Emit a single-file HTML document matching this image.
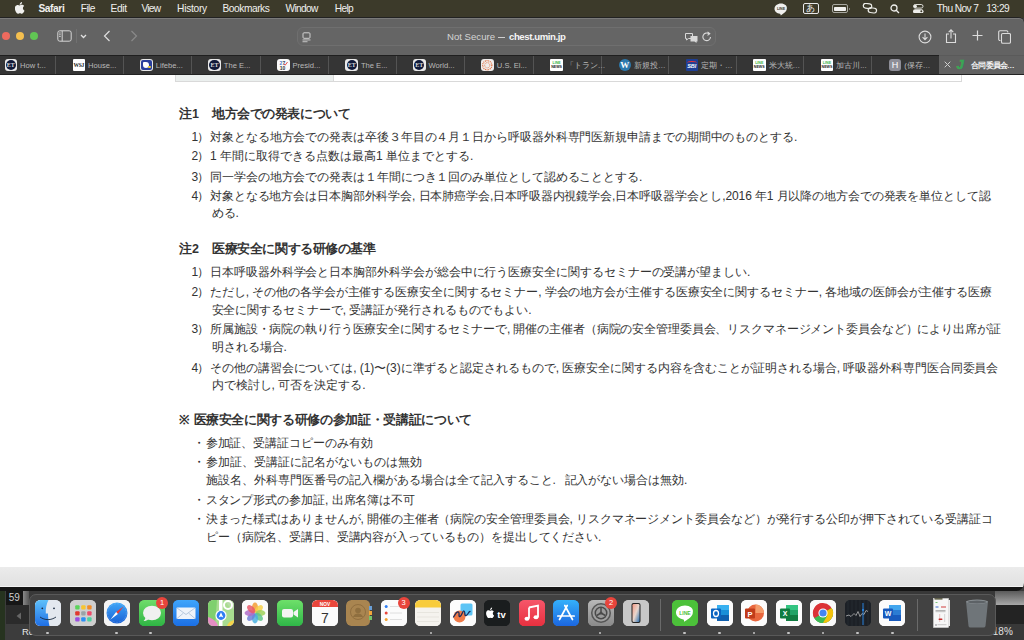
<!DOCTYPE html>
<html><head><meta charset="utf-8">
<style>
*{box-sizing:border-box}
html,body{margin:0;padding:0;width:1024px;height:640px;overflow:hidden;background:#3a3a3a;font-family:"Liberation Sans",sans-serif;position:relative}
.a{position:absolute;white-space:nowrap}
#menubar{position:absolute;left:0;top:0;width:1024px;height:18px;background:#3c3a2a;color:#f0f0ee;font-size:10.2px}
#menubar .m{position:absolute;top:2.5px;white-space:nowrap;line-height:12px}
#win{position:absolute;left:0;top:17px;width:1024px;height:574px;background:#151515;border-radius:0 6px 8px 0;overflow:hidden}
#win::before{content:'';position:absolute;right:0;top:0;width:8px;height:8px;background:#222}
#toolbar{position:absolute;left:0;top:0;width:1024px;height:37.5px;background:#636363;border-top:1px solid #222;box-shadow:inset 0 1px 0 #7a7a7a;border-top-right-radius:5px}
#tabbar{position:absolute;left:0;top:37.5px;width:1024px;height:20.5px;background:#353535}
.sep{position:absolute;top:1px;width:1px;height:18px;background:#545454}
.tt{position:absolute;top:6.2px;color:#b9b9b9;font-size:7.6px;line-height:10px;white-space:nowrap}
.ti{position:absolute;top:4px;width:12.5px;height:12.5px;border-radius:3px;overflow:hidden}
#content{position:absolute;left:0;top:58px;width:1024px;height:492px;background:#fff}
.l{position:absolute;white-space:nowrap;line-height:14px;color:#333;font-size:12px}
.h{font-weight:bold;font-size:12.5px}
#wbot{position:absolute;left:0;top:550px;width:1024px;height:20px;background:linear-gradient(#ebebeb,#e1e1e1);border-bottom:1px solid #f2f2f2}
.di{position:absolute;top:600px;width:26px;height:26px;overflow:hidden}
</style></head><body>
<div id="menubar">
<svg class="a" style="left:15px;top:2.4px" width="10.6" height="11.8" viewBox="0 0 21.5 24"><path fill="#f0f0ee" d="M12.152 6.896c-.948 0-2.415-1.078-3.96-1.04-2.04.027-3.91 1.183-4.961 3.014-2.117 3.675-.546 9.103 1.519 12.09 1.013 1.454 2.208 3.09 3.792 3.039 1.52-.065 2.09-.987 3.935-.987 1.831 0 2.35.987 3.96.948 1.637-.026 2.676-1.48 3.676-2.948 1.156-1.688 1.636-3.325 1.662-3.415-.039-.013-3.182-1.221-3.22-4.857-.026-3.04 2.48-4.494 2.597-4.559-1.429-2.09-3.623-2.324-4.39-2.376-2-.156-3.675 1.090-4.610 1.090zM15.53 3.830c.843-1.012 1.4-2.427 1.245-3.830-1.207.052-2.662.805-3.532 1.818-.780.896-1.454 2.338-1.273 3.714 1.338.104 2.715-.688 3.559-1.701" transform="translate(-2.5 0)"/></svg>
<div class="m" style="left:38.5px;font-weight:bold;letter-spacing:-0.42px">Safari</div>
<div class="m" style="left:80.7px;letter-spacing:-0.53px">File</div>
<div class="m" style="left:110.4px;letter-spacing:-0.27px">Edit</div>
<div class="m" style="left:141.6px;letter-spacing:-0.83px">View</div>
<div class="m" style="left:177.1px;letter-spacing:-0.27px">History</div>
<div class="m" style="left:222.5px;letter-spacing:-0.45px">Bookmarks</div>
<div class="m" style="left:285.5px;letter-spacing:-0.68px">Window</div>
<div class="m" style="left:334.8px;letter-spacing:-0.7px">Help</div>
<!-- right status -->
<svg class="a" style="left:774px;top:2.5px" width="14" height="13" viewBox="0 0 14 13"><path fill="#f0f0ee" d="M7 0.5C3.4 0.5 0.5 2.8 0.5 5.7c0 2.6 2.3 4.7 5.4 5.1c0.2 0.1 0.5 0.2 0.6 0.4c0.1 0.2 0 0.5 0 0.7c0 0.2-0.1 0.6 0.5 0.3c0.6-0.3 3.3-2 4.5-3.4c0.9-0.9 1.3-1.9 1.3-3C13.5 2.8 10.6 0.5 7 0.5z"/><text x="7" y="7.3" font-size="3.6" font-family="Liberation Sans" font-weight="bold" fill="#3c3a2a" text-anchor="middle">LINE</text></svg>
<div class="a" style="left:802.6px;top:3px;width:16px;height:11px;border:1px solid #e8e8e8;border-radius:2px;color:#f0f0ee;font-size:8.5px;line-height:9px;text-align:center">あ</div>
<div class="a" style="left:832px;top:4.4px;width:16px;height:8.3px;border:1px solid #a8a8a0;border-radius:2px;padding:1.2px"><div style="width:100%;height:100%;background:#f0f0ee;border-radius:0.8px"></div></div>
<div class="a" style="left:848.5px;top:7.5px;width:1.5px;height:2.5px;background:#9a9a9a;border-radius:0 1px 1px 0"></div>
<svg class="a" style="left:861.5px;top:3px" width="16" height="11" viewBox="0 0 16 11"><g fill="none" stroke="#eeeeea" stroke-width="1.2" transform="rotate(8 8 5.5)"><rect x="1" y="1" width="8.4" height="4.8" rx="2.4"/><rect x="6.4" y="4.6" width="8.4" height="4.8" rx="2.4"/></g></svg>
<svg class="a" style="left:889.5px;top:4px" width="10" height="10" viewBox="0 0 10 10"><g fill="none" stroke="#f0f0ee" stroke-width="1.3"><circle cx="4" cy="4" r="3"/><path d="M6.2 6.2L9 9"/></g></svg>
<svg class="a" style="left:913.3px;top:3.8px" width="10.5" height="9.5" viewBox="0 0 10.5 9.5"><rect x="0.5" y="0.5" width="9.5" height="3.6" rx="1.8" fill="none" stroke="#eeeeea" stroke-width="0.9"/><circle cx="2.3" cy="2.3" r="1.6" fill="#eeeeea"/><rect x="0" y="5.2" width="10.5" height="4.3" rx="2.15" fill="#eeeeea"/><circle cx="8.3" cy="7.35" r="1" fill="#3c3a2a"/></svg>
<div class="m" style="left:936.7px;letter-spacing:-0.6px">Thu Nov 7</div><div class="m" style="left:986.2px;letter-spacing:-0.48px">13:29</div>
</div>
<div id="win">
<div id="toolbar">
<div class="a" style="left:1.5px;top:13.9px;width:8.6px;height:8.6px;border-radius:50%;background:#ed6a5e"></div>
<div class="a" style="left:15.5px;top:13.9px;width:8.6px;height:8.6px;border-radius:50%;background:#f4bf4f"></div>
<div class="a" style="left:29.8px;top:13.9px;width:8.6px;height:8.6px;border-radius:50%;background:#61c554"></div>
<svg class="a" style="left:56.5px;top:12px" width="15" height="12" viewBox="0 0 15 12"><g fill="none" stroke="#d6d6d6" stroke-width="1"><rect x="0.8" y="0.8" width="13.4" height="10.4" rx="2"/><path d="M5.2 0.8v10.4"/></g><g fill="#d6d6d6"><rect x="2" y="2.6" width="1.8" height="0.8"/><rect x="2" y="4.4" width="1.8" height="0.8"/><rect x="2" y="6.2" width="1.8" height="0.8"/></g></svg>
<div class="a" style="left:75.5px;top:11px;width:1px;height:14px;background:#707070"></div>
<svg class="a" style="left:80px;top:16px" width="7" height="5" viewBox="0 0 7 5"><path d="M1 1l2.5 2.5L6 1" fill="none" stroke="#e0e0e0" stroke-width="1.3"/></svg>
<svg class="a" style="left:103px;top:12px" width="8" height="12" viewBox="0 0 8 12"><path d="M6.5 1L1.5 6l5 5" fill="none" stroke="#dedede" stroke-width="1.2"/></svg>
<svg class="a" style="left:129.5px;top:12px" width="8" height="12" viewBox="0 0 8 12"><path d="M1.5 1l5 5l-5 5" fill="none" stroke="#8a8a8a" stroke-width="1.2"/></svg>
<div class="a" style="left:296.5px;top:9px;width:419px;height:19px;border:1px solid #6f6f6f;border-radius:6px;background:#656565"></div>
<svg class="a" style="left:301.5px;top:13.5px" width="9" height="11" viewBox="0 0 9 11"><g fill="none" stroke="#d0d0d0" stroke-width="1"><rect x="1" y="0.8" width="7" height="5.5" rx="1"/></g><rect x="0.5" y="7.5" width="8" height="0.9" fill="#d0d0d0"/><rect x="0.5" y="9.3" width="5" height="0.9" fill="#d0d0d0"/></svg>
<div class="a" style="left:447px;top:12.5px;color:#d4d4d4;font-size:9.6px;line-height:12px">Not Secure</div><div class="a" style="left:497.5px;top:19px;width:7px;height:1px;background:#cfcfcf"></div><div class="a" style="left:509px;top:12.5px;color:#f6f6f6;font-size:9.6px;line-height:12px;font-weight:bold;letter-spacing:-0.42px">chest.umin.jp</div>
<svg class="a" style="left:683.5px;top:12.5px" width="15" height="13" viewBox="0 0 15 13"><g fill="none" stroke="#d8d8d8" stroke-width="1"><path d="M1.5 2.5h7v5h-4l-2 1.5v-1.5h-1z"/></g><path d="M6.5 5h7v5.5h-1v1.5l-2-1.5h-4z" fill="#d8d8d8"/></svg>
<svg class="a" style="left:702px;top:13px" width="10" height="11" viewBox="0 0 10 11"><path d="M8.5 6a3.8 3.8 0 1 1-1.5-3.2" fill="none" stroke="#d8d8d8" stroke-width="1.1"/><path d="M5.5 0.8l2.3 2l-2.3 1.6" fill="none" stroke="#d8d8d8" stroke-width="1.1"/></svg>
<svg class="a" style="left:917.5px;top:11.5px" width="14" height="14" viewBox="0 0 14 14"><g fill="none" stroke="#dcdcdc" stroke-width="1.1"><circle cx="7" cy="7" r="5.9"/><path d="M7 3.5v6M4.6 7.2L7 9.6l2.4-2.4"/></g></svg>
<svg class="a" style="left:945px;top:10.5px" width="12" height="15" viewBox="0 0 12 15"><g fill="none" stroke="#dcdcdc" stroke-width="1.1"><path d="M4 5H1.5v8.5h9V5H8"/><path d="M6 9.5V1M3.7 3.2L6 0.9l2.3 2.3"/></g></svg>
<svg class="a" style="left:971.5px;top:12px" width="11" height="11" viewBox="0 0 11 11"><path d="M5.5 0.5v10M0.5 5.5h10" stroke="#dcdcdc" stroke-width="1.2"/></svg>
<svg class="a" style="left:997.5px;top:11.5px" width="13" height="14" viewBox="0 0 13 14"><g fill="none" stroke="#dcdcdc" stroke-width="1.1"><path d="M2.5 10.5h-0.5a1.3 1.3 0 0 1-1.3-1.3V2a1.3 1.3 0 0 1 1.3-1.3h6.5A1.3 1.3 0 0 1 9.8 2v0.5"/><rect x="3.5" y="3.5" width="9" height="9.8" rx="1.3"/></g></svg>
</div>
<div id="tabbar">
<div class="a" style="left:0;top:0;width:1024px;height:1px;background:#1f1f1f"></div>
<div class="sep" style="left:55.0px"></div>
<div class="sep" style="left:122.8px"></div>
<div class="sep" style="left:190.8px"></div>
<div class="sep" style="left:259.5px"></div>
<div class="sep" style="left:327.9px"></div>
<div class="sep" style="left:395.5px"></div>
<div class="sep" style="left:463.8px"></div>
<div class="sep" style="left:532.8px"></div>
<div class="sep" style="left:601.0px"></div>
<div class="sep" style="left:668.0px"></div>
<div class="sep" style="left:735.5px"></div>
<div class="sep" style="left:803.2px"></div>
<div class="sep" style="left:871.2px"></div>
<div class="ti" style="left:4.5px;background:#e9e9e9;padding:1.2px"><div style="width:100%;height:100%;border-radius:50%;background:#101a3a;color:#ddd;font:bold 6px/10px 'Liberation Serif',serif;text-align:center">ET</div></div>
<div class="tt" style="left:20.0px">How t...</div>
<div class="ti" style="left:72.5px;background:#fff;border-radius:1px;color:#222;font:bold 5.5px/12.5px 'Liberation Serif',serif;text-align:center;letter-spacing:-0.3px">WSJ</div>
<div class="tt" style="left:88.0px">House...</div>
<div class="ti" style="left:140.3px;background:#e8e8e8;padding:1.2px"><div style="width:100%;height:100%;border-radius:2px;background:#2a3f9c;position:relative"><div style="position:absolute;left:2px;top:2px;width:6px;height:6px;background:#fff;border-radius:1px 3px 3px 3px"></div><div style="position:absolute;left:7px;top:6px;width:2.5px;height:2.5px;background:#f0d030;border-radius:50%"></div></div></div>
<div class="tt" style="left:155.8px">Lifebe...</div>
<div class="ti" style="left:208.3px;background:#e9e9e9;padding:1.2px"><div style="width:100%;height:100%;border-radius:50%;background:#101a3a;color:#ddd;font:bold 6px/10px 'Liberation Serif',serif;text-align:center">ET</div></div>
<div class="tt" style="left:223.8px">The E...</div>
<div class="ti" style="left:277px;background:#fafafa"><svg width="12.5" height="12.5" viewBox="0 0 12.5 12.5" style="position:absolute;left:0;top:0"><g font-family="Liberation Sans" font-weight="bold" font-size="5"><text x="2.5" y="6" fill="#4a78c8">2</text><text x="5.5" y="6" fill="#3a4a6a">7</text><text x="2.8" y="10.5" fill="#333">10</text></g><path d="M7 5l1.2 1.2L10.5 3" stroke="#e05050" stroke-width="1" fill="none"/></svg></div>
<div class="tt" style="left:292.5px">Presid...</div>
<div class="ti" style="left:345.4px;background:#e9e9e9;padding:1.2px"><div style="width:100%;height:100%;border-radius:50%;background:#101a3a;color:#ddd;font:bold 6px/10px 'Liberation Serif',serif;text-align:center">ET</div></div>
<div class="tt" style="left:360.9px">The E...</div>
<div class="ti" style="left:413px;background:#e9e9e9;padding:1.2px"><div style="width:100%;height:100%;border-radius:50%;background:#101a3a;color:#ddd;font:bold 6px/10px 'Liberation Serif',serif;text-align:center">ET</div></div>
<div class="tt" style="left:428.5px">World...</div>
<div class="ti" style="left:481.3px;background:#efeceb"><svg width="12.5" height="12.5" viewBox="0 0 12.5 12.5" style="position:absolute;left:0;top:0"><circle cx="6.25" cy="6.25" r="4.6" fill="none" stroke="#e0602a" stroke-width="1.1" stroke-dasharray="0.9 0.8"/><circle cx="6.25" cy="6.25" r="2.6" fill="none" stroke="#e8845a" stroke-width="0.9" stroke-dasharray="1.2 0.6"/></svg></div>
<div class="tt" style="left:496.8px">U.S. El...</div>
<div class="ti" style="left:550.3px;background:#fff;border-radius:1px;padding-top:2px;text-align:center;font:bold 3.6px/4px 'Liberation Sans',sans-serif"><div style="color:#3bb54a">LINE</div><div style="color:#222">NEWS</div></div>
<div class="tt" style="left:565.8px">「トラン…</div>
<div class="ti" style="left:618.5px;border-radius:50%;background:#2d79ad;color:#fff;font:bold 9px/12.5px 'Liberation Serif',serif;text-align:center">W</div>
<div class="tt" style="left:634.0px">新規投…</div>
<div class="ti" style="left:685.5px;border-radius:1px;background:#1e3f94;color:#fff;font:italic bold 5.5px/14px 'Liberation Sans',sans-serif;text-align:center">SBI<div style="position:absolute;left:1px;top:2.5px;width:10px;height:4px;border-top:1.3px solid #e33;border-radius:50%"></div></div>
<div class="tt" style="left:701.0px">定期・…</div>
<div class="ti" style="left:753px;background:#fff;border-radius:1px;padding-top:2px;text-align:center;font:bold 3.6px/4px 'Liberation Sans',sans-serif"><div style="color:#3bb54a">LINE</div><div style="color:#222">NEWS</div></div>
<div class="tt" style="left:768.5px">米大統…</div>
<div class="ti" style="left:820.7px;background:#fff;border-radius:1px;padding-top:2px;text-align:center;font:bold 3.6px/4px 'Liberation Sans',sans-serif"><div style="color:#3bb54a">LINE</div><div style="color:#222">NEWS</div></div>
<div class="tt" style="left:836.2px">加古川...</div>
<div class="ti" style="left:888.7px;background:#8e8e98;color:#fff;font:9px/12.5px 'Liberation Sans',sans-serif;text-align:center">H</div>
<div class="tt" style="left:904.2px">(保存…</div>
<div class="a" style="left:939px;top:0;width:85px;height:20.5px;background:#616161;border-top:1px solid #5a5a5a"></div>
<svg class="a" style="left:944px;top:6px" width="7" height="7" viewBox="0 0 7 7"><path d="M0.7 0.7l5.6 5.6M6.3 0.7L0.7 6.3" stroke="#cfcfcf" stroke-width="1"/></svg>
<div class="a" style="left:956.5px;top:3px;width:10px;height:13px;color:#3aa655;font:italic 900 13px/13px 'Liberation Sans',sans-serif;-webkit-text-stroke:0.6px #3aa655">J</div>
<div class="tt" style="left:971.4px;color:#f4f4f4;font-weight:bold;letter-spacing:-0.9px">合同委員会…</div>
<div class="a" style="left:0;top:19.5px;width:1024px;height:1px;background:#222"></div>
</div>
<div id="content">
<div class="a" style="left:175px;top:0;width:787px;height:7px;border:1px solid #d9d9d9;border-top:none;background:#fff"><div style="position:absolute;left:0;top:0;width:158px;height:6px;background:#ebefee;border-right:1px solid #d9d9d9"></div></div>
</div>
<div id="wbot"></div>
</div>

<!--C-->
<div class="l h" style="top:106.9px;left:179px">注1</div>
<div class="l h" style="top:106.9px;left:212px;letter-spacing:-0.420px">地方会での発表について</div>
<div class="l" style="top:129.5px;left:191.5px;letter-spacing:-1.200px">1）</div>
<div class="l" style="top:129.5px;left:210px;letter-spacing:-0.082px">対象となる地方会での発表は卒後３年目の４月１日から呼吸器外科専門医新規申請までの期間中のものとする.</div>
<div class="l" style="top:149.1px;left:191.5px;letter-spacing:-1.200px">2）</div>
<div class="l" style="top:149.1px;left:210px">1 年間に取得できる点数は最高1 単位までとする.</div>
<div class="l" style="top:169.5px;left:191.5px;letter-spacing:-1.200px">3）</div>
<div class="l" style="top:169.5px;left:210px;letter-spacing:-0.083px">同一学会の地方会での発表は１年間につき１回のみ単位として認めることとする.</div>
<div class="l" style="top:189px;left:191.5px;letter-spacing:-1.200px">4）</div>
<div class="l" style="top:189px;left:210px;letter-spacing:-0.111px">対象となる地方会は日本胸部外科学会, 日本肺癌学会,日本呼吸器内視鏡学会,日本呼吸器学会とし,2016 年1 月以降の地方会での発表を単位として認</div>
<div class="l" style="top:206.4px;left:211.5px">める.</div>
<div class="l h" style="top:242.15px;left:179px">注2</div>
<div class="l h" style="top:242.15px;left:212px;letter-spacing:-0.416px">医療安全に関する研修の基準</div>
<div class="l" style="top:265.0px;left:191.5px;letter-spacing:-1.200px">1）</div>
<div class="l" style="top:265.0px;left:210px;letter-spacing:-0.067px">日本呼吸器外科学会と日本胸部外科学会が総会中に行う医療安全に関するセミナーの受講が望ましい.</div>
<div class="l" style="top:284.9px;left:191.5px;letter-spacing:-1.200px">2）</div>
<div class="l" style="top:284.9px;left:210px;letter-spacing:-0.087px">ただし, その他の各学会が主催する医療安全に関するセミナー, 学会の地方会が主催する医療安全に関するセミナー, 各地域の医師会が主催する医療</div>
<div class="l" style="top:302.6px;left:211.5px;letter-spacing:-0.071px">安全に関するセミナーで, 受講証が発行されるものでもよい.</div>
<div class="l" style="top:322.1px;left:191.5px;letter-spacing:-1.200px">3）</div>
<div class="l" style="top:322.1px;left:210px;letter-spacing:-0.119px">所属施設・病院の執り行う医療安全に関するセミナーで, 開催の主催者（病院の安全管理委員会、リスクマネージメント委員会など）により出席が証</div>
<div class="l" style="top:340.0px;left:211.5px">明される場合.</div>
<div class="l" style="top:360.6px;left:191.5px;letter-spacing:-1.200px">4）</div>
<div class="l" style="top:360.6px;left:210px;letter-spacing:-0.068px">その他の講習会については, (1)〜(3)に準ずると認定されるもので, 医療安全に関する内容を含むことが証明される場合, 呼吸器外科専門医合同委員会</div>
<div class="l" style="top:378.0px;left:211.5px">内で検討し, 可否を決定する.</div>
<div class="l h" style="top:412.9px;left:179px">※</div>
<div class="l h" style="top:412.9px;left:193.5px;letter-spacing:-0.348px">医療安全に関する研修の参加証・受講証について</div>
<div class="l" style="top:435.6px;left:193px">・</div>
<div class="l" style="top:435.6px;left:205.6px;letter-spacing:-0.077px">参加証、受講証コピーのみ有効</div>
<div class="l" style="top:455.2px;left:193px">・</div>
<div class="l" style="top:455.2px;left:205.6px">参加証、受講証に記名がないものは無効</div>
<div class="l" style="top:472.8px;left:206px;letter-spacing:-0.050px">施設名、外科専門医番号の記入欄がある場合は全て記入すること.<span style="display:inline-block;width:8.7px"></span>記入がない場合は無効.</div>
<div class="l" style="top:492.5px;left:193px">・</div>
<div class="l" style="top:492.5px;left:205.6px;letter-spacing:-0.056px">スタンプ形式の参加証, 出席名簿は不可</div>
<div class="l" style="top:511.6px;left:193px">・</div>
<div class="l" style="top:511.6px;left:205.6px;letter-spacing:-0.088px">決まった様式はありませんが, 開催の主催者（病院の安全管理委員会, リスクマネージメント委員会など）が発行する公印が押下されている受講証コ</div>
<div class="l" style="top:529.6px;left:206px;letter-spacing:-0.121px">ピー（病院名、受講日、受講内容が入っているもの）を提出してください.</div>
<!--/C-->
<div id="desk">
<div class="a" style="left:0;top:591px;width:1024px;height:49px;background:#383838"></div>
<div class="a" style="left:0;top:591px;width:5px;height:49px;background:#26331f"></div>
<div class="a" style="left:5px;top:591px;width:24px;height:49px;background:#3c3c3c"></div>
<div class="a" style="left:6px;top:591px;width:16.5px;height:14px;background:#161616;color:#cfcfcf;font:10px/14px 'Liberation Sans',sans-serif;text-align:center">59</div>
<div class="a" style="left:22.5px;top:591px;width:6.5px;height:14px;background:linear-gradient(90deg,#888,#555)"></div>
<div class="a" style="left:5.5px;top:605px;width:23.5px;height:18.5px;background:#2b2b2b"></div>
<svg class="a" style="left:15.5px;top:611.5px" width="6" height="8" viewBox="0 0 6 8"><path d="M5 0.5v7L0.5 4z" fill="#666"/></svg>
<div class="a" style="left:22px;top:626px;color:#e8e8e8;font:9.5px/12px 'Liberation Sans',sans-serif">Re</div>
<div class="a" style="left:995px;top:591px;width:29px;height:14px;background:linear-gradient(#5a5a5a,#a8a8a8)"></div>
<div class="a" style="left:995px;top:605px;width:29px;height:19px;background:#232323"></div>
<div class="a" style="left:990px;top:626px;color:#e0e0e0;font:10px/12px 'Liberation Sans',sans-serif">.18%</div>
<div class="a" style="left:29px;top:594px;width:966.5px;height:41.5px;background:#424242;border:1px solid #595959;border-radius:7px"></div>
<div class="di" style="left:35.0px;background:#e3e8ef;border-radius:5.5px;"><svg width="26" height="26" viewBox="0 0 26 26" style="position:absolute;left:0;top:0"><defs><linearGradient id="fg" x1="0" y1="0" x2="0" y2="1"><stop offset="0" stop-color="#5ec0fa"/><stop offset="1" stop-color="#1f6fe6"/></linearGradient></defs><rect width="26" height="26" fill="#e3e8ef"/><path d="M0 0h13.5c-2 4-3 8-2.7 13.5h2.2c0 4 0.5 8.5 1.5 12.5H0z" fill="url(#fg)"/><circle cx="7.3" cy="8.3" r="0.9" fill="#1a2a40"/><circle cx="19" cy="8.3" r="0.9" fill="#1a2a40"/><path d="M5 17c5 3.5 11 3.5 16 0" fill="none" stroke="#1a2a40" stroke-width="0.9"/></svg></div>
<div class="di" style="left:69.6px;background:#cfcfcf;border-radius:5.5px;"><svg width="26" height="26" viewBox="0 0 26 26" style="position:absolute;left:0;top:0"><rect width="26" height="26" fill="#cfcfcf"/><rect x="5.2" y="5.2" width="4.4" height="4.4" rx="1" fill="#5bd35b"/><rect x="11.2" y="5.2" width="4.4" height="4.4" rx="1" fill="#f7c531"/><rect x="17.2" y="5.2" width="4.4" height="4.4" rx="1" fill="#f28c2a"/><rect x="5.2" y="11.2" width="4.4" height="4.4" rx="1" fill="#e0392f"/><rect x="11.2" y="11.2" width="4.4" height="4.4" rx="1" fill="#9aa3a8"/><rect x="17.2" y="11.2" width="4.4" height="4.4" rx="1" fill="#ee4b6a"/><rect x="5.2" y="17.2" width="4.4" height="4.4" rx="1" fill="#9b4ee0"/><rect x="11.2" y="17.2" width="4.4" height="4.4" rx="1" fill="#2b8ff6"/><rect x="17.2" y="17.2" width="4.4" height="4.4" rx="1" fill="#4fd1a1"/></svg></div>
<div class="di" style="left:104.1px;background:#f4f4f4;border-radius:5.5px;"><svg width="26" height="26" viewBox="0 0 26 26" style="position:absolute;left:0;top:0"><defs><linearGradient id="sg" x1="0" y1="0" x2="0" y2="1"><stop offset="0" stop-color="#3fa6f7"/><stop offset="1" stop-color="#1a62d6"/></linearGradient></defs><rect width="26" height="26" fill="#f4f4f4"/><circle cx="13" cy="13" r="10.5" fill="url(#sg)"/><circle cx="13" cy="13" r="9.3" fill="none" stroke="#d8e8fa" stroke-width="0.5" stroke-dasharray="0.4 1.1"/><path d="M19.5 6.5L13.9 13.9L12.1 12.1z" fill="#f03b30"/><path d="M6.5 19.5L12.1 12.1L13.9 13.9z" fill="#fff"/></svg></div>
<div class="di" style="left:138.7px;background:#3cc153;border-radius:5.5px;"><svg width="26" height="26" viewBox="0 0 26 26" style="position:absolute;left:0;top:0"><defs><linearGradient id="mg" x1="0" y1="0" x2="0" y2="1"><stop offset="0" stop-color="#6fdc6a"/><stop offset="1" stop-color="#2fb544"/></linearGradient></defs><rect width="26" height="26" fill="url(#mg)"/><ellipse cx="13" cy="13" rx="9" ry="7.3" fill="#f0f0f0"/><path d="M6.5 17.5c-0.3 1.8-1.2 3-2 3.5c2 0 3.8-0.8 4.8-1.8z" fill="#f0f0f0"/></svg></div>
<div class="di" style="left:173.2px;background:#2a85f0;border-radius:5.5px;"><svg width="26" height="26" viewBox="0 0 26 26" style="position:absolute;left:0;top:0"><defs><linearGradient id="mlg" x1="0" y1="0" x2="0" y2="1"><stop offset="0" stop-color="#3fa5fb"/><stop offset="1" stop-color="#1b6fe4"/></linearGradient></defs><rect width="26" height="26" fill="url(#mlg)"/><rect x="3.5" y="7.5" width="19" height="11.5" rx="1" fill="#eef3fa"/><path d="M3.8 7.8L13 14.5l9.2-6.7M3.8 18.7l6.5-5.5M22.2 18.7l-6.5-5.5" fill="none" stroke="#9db4d0" stroke-width="0.7"/></svg></div>
<div class="di" style="left:207.8px;background:#e8f0e0;border-radius:5.5px;"><svg width="26" height="26" viewBox="0 0 26 26" style="position:absolute;left:0;top:0"><rect width="26" height="26" fill="#a8dc90"/><path d="M0 0h9l-2 26H0z" fill="#7fd06e"/><path d="M17 0h9v9c-3 0-6-3-9-9z" fill="#b9dca8"/><path d="M0 17c6 2 9 5 10 9H0z" fill="#e58ec3"/><path d="M19 26c1-3 3-5 7-6v6z" fill="#f6d34a"/><path d="M11 0h3.5v26H11z" fill="#fff"/><circle cx="20" cy="5" r="4" fill="none" stroke="#fff" stroke-width="2"/><circle cx="13" cy="15.5" r="5" fill="#2f7ef3" stroke="#fff" stroke-width="1.2"/><path d="M13 12.3l2.3 5.2l-2.3-1.1l-2.3 1.1z" fill="#fff"/></svg></div>
<div class="di" style="left:242.4px;background:#fafafa;border-radius:5.5px;"><svg width="26" height="26" viewBox="0 0 26 26" style="position:absolute;left:0;top:0"><rect width="26" height="26" fill="#fafafa"/><ellipse cx="13" cy="7.6" rx="3" ry="5" fill="#f39c34" opacity="0.85" transform="rotate(0 13 13)"/><ellipse cx="13" cy="7.6" rx="3" ry="5" fill="#f7d04a" opacity="0.85" transform="rotate(45 13 13)"/><ellipse cx="13" cy="7.6" rx="3" ry="5" fill="#9fd05a" opacity="0.85" transform="rotate(90 13 13)"/><ellipse cx="13" cy="7.6" rx="3" ry="5" fill="#5ec48a" opacity="0.85" transform="rotate(135 13 13)"/><ellipse cx="13" cy="7.6" rx="3" ry="5" fill="#49b0e0" opacity="0.85" transform="rotate(180 13 13)"/><ellipse cx="13" cy="7.6" rx="3" ry="5" fill="#6f7fd8" opacity="0.85" transform="rotate(225 13 13)"/><ellipse cx="13" cy="7.6" rx="3" ry="5" fill="#b06cc8" opacity="0.85" transform="rotate(270 13 13)"/><ellipse cx="13" cy="7.6" rx="3" ry="5" fill="#e8586a" opacity="0.85" transform="rotate(315 13 13)"/></svg></div>
<div class="di" style="left:276.9px;background:#45c756;border-radius:5.5px;"><svg width="26" height="26" viewBox="0 0 26 26" style="position:absolute;left:0;top:0"><defs><linearGradient id="ftg" x1="0" y1="0" x2="0" y2="1"><stop offset="0" stop-color="#6ee06a"/><stop offset="1" stop-color="#2fb748"/></linearGradient></defs><rect width="26" height="26" fill="url(#ftg)"/><rect x="5" y="9" width="11" height="8.5" rx="2" fill="#f4f4f4"/><path d="M16.5 12l4.5-3v8.5l-4.5-3z" fill="#f4f4f4"/></svg></div>
<div class="di" style="left:311.5px;background:#fbfbfb;border-radius:5.5px;"><svg width="26" height="26" viewBox="0 0 26 26" style="position:absolute;left:0;top:0"><rect width="26" height="26" fill="#fbfbfb"/><rect width="26" height="7" fill="#e9463b"/><text x="13" y="5.6" font-size="4.8" font-family="Liberation Sans" font-weight="bold" fill="#fff" text-anchor="middle">NOV</text><text x="13" y="22.5" font-size="14" font-family="Liberation Sans" fill="#333" text-anchor="middle">7</text></svg></div>
<div class="di" style="left:346.0px;background:transparent;border-radius:5.5px;"><svg width="26" height="26" viewBox="0 0 26 26" style="position:absolute;left:0;top:0"><rect width="24" height="26" rx="5" fill="#a98550"/><rect x="23" y="6" width="3" height="4" fill="#6aa0d8"/><rect x="23" y="11" width="3" height="4" fill="#f2a63a"/><rect x="23" y="16" width="3" height="4" fill="#76c46a"/><circle cx="12" cy="12" r="7.5" fill="none" stroke="#8a6a3c" stroke-width="0.8"/><circle cx="12" cy="10.5" r="2.8" fill="#8f6f3f"/><path d="M6.8 17c1.2-2.5 3-3.5 5.2-3.5s4 1 5.2 3.5" fill="#8f6f3f"/></svg></div>
<div class="di" style="left:380.6px;background:#fbfbfb;border-radius:5.5px;"><svg width="26" height="26" viewBox="0 0 26 26" style="position:absolute;left:0;top:0"><rect width="26" height="26" fill="#fbfbfb"/><circle cx="5.2" cy="6.5" r="1.5" fill="#2f7ef3"/><circle cx="5.2" cy="13" r="1.5" fill="#e9463b"/><circle cx="5.2" cy="19.5" r="1.5" fill="#f4a22d"/><path d="M9 6.5h12M9 13h12M9 19.5h12" stroke="#d8d8d8" stroke-width="0.8"/></svg></div>
<div class="di" style="left:415.2px;background:#f5f3ee;border-radius:5.5px;"><svg width="26" height="26" viewBox="0 0 26 26" style="position:absolute;left:0;top:0"><rect width="26" height="26" fill="#f5f3ee"/><rect width="26" height="7.5" fill="#f8cc3c"/><path d="M2 12.5h22M2 17h22M2 21.5h22" stroke="#dedbd4" stroke-width="0.6"/></svg></div>
<div class="di" style="left:449.7px;background:#fdfdfd;border-radius:5.5px;"><svg width="26" height="26" viewBox="0 0 26 26" style="position:absolute;left:0;top:0"><rect width="26" height="26" fill="#fdfdfd"/><rect x="10.5" y="3.5" width="12" height="12" rx="1.5" fill="#5cc4f5"/><circle cx="9.5" cy="16.5" r="6" fill="#f07a48"/><path d="M3.5 17c2-3 3.5-6 5-5s-0.5 5 1.5 4.5s2.5-6 4-5.5s0 5 2 4.5s2.5-4 4-4" fill="none" stroke="#1d2d5c" stroke-width="1.3" stroke-linecap="round"/></svg></div>
<div class="di" style="left:484.3px;background:#1a1d1e;border-radius:5.5px;"><svg width="26" height="26" viewBox="0 0 26 26" style="position:absolute;left:0;top:0"><rect width="26" height="26" fill="#1a1d1e"/><path d="M7.6 9.3c0.4-0.5 0.6-1.1 0.5-1.7c-0.5 0-1.1 0.3-1.5 0.8c-0.3 0.4-0.6 1-0.5 1.6c0.6 0 1.1-0.3 1.5-0.7zM8.1 10.2c-0.8 0-1.5 0.5-1.9 0.5s-1-0.4-1.6-0.4c-0.9 0-1.7 0.5-2.1 1.3c-0.9 1.6-0.2 3.9 0.6 5.2c0.4 0.6 0.9 1.3 1.6 1.3c0.6 0 0.9-0.4 1.6-0.4s0.9 0.4 1.6 0.4s1.1-0.6 1.5-1.3c0.5-0.7 0.7-1.4 0.7-1.4s-1.3-0.5-1.3-2c0-1.3 1-1.9 1.1-1.9c-0.6-0.9-1.5-1-1.8-1z" fill="#fff"/><text x="17.5" y="17.5" font-size="9.5" font-family="Liberation Sans" font-weight="bold" fill="#fff" text-anchor="middle">tv</text></svg></div>
<div class="di" style="left:518.8px;background:#ee4354;border-radius:5.5px;"><svg width="26" height="26" viewBox="0 0 26 26" style="position:absolute;left:0;top:0"><defs><linearGradient id="mug" x1="0" y1="0" x2="0" y2="1"><stop offset="0" stop-color="#f6566a"/><stop offset="1" stop-color="#e8303f"/></linearGradient></defs><rect width="26" height="26" fill="url(#mug)"/><path d="M10 7.5l9-2v11.5" fill="none" stroke="#fff" stroke-width="1.8"/><path d="M10 7.5v11" stroke="#fff" stroke-width="1.8"/><ellipse cx="8" cy="18.7" rx="2.5" ry="2" fill="#fff"/><ellipse cx="17" cy="17.2" rx="2.5" ry="2" fill="#fff"/></svg></div>
<div class="di" style="left:553.4px;background:#2688ee;border-radius:5.5px;"><svg width="26" height="26" viewBox="0 0 26 26" style="position:absolute;left:0;top:0"><defs><linearGradient id="asg" x1="0" y1="0" x2="0" y2="1"><stop offset="0" stop-color="#35b1fb"/><stop offset="1" stop-color="#1b66e0"/></linearGradient></defs><rect width="26" height="26" fill="url(#asg)"/><path d="M14.2 5.5L6.5 19.5M11.8 5.5L19.5 19.5M4.8 16h16.4" stroke="#fff" stroke-width="1.7" stroke-linecap="round"/></svg></div>
<div class="di" style="left:588.0px;background:#a0a0a0;border-radius:5.5px;"><svg width="26" height="26" viewBox="0 0 26 26" style="position:absolute;left:0;top:0"><defs><linearGradient id="stg" x1="0" y1="0" x2="0" y2="1"><stop offset="0" stop-color="#b8b8b8"/><stop offset="1" stop-color="#8a8a8a"/></linearGradient></defs><rect width="26" height="26" fill="url(#stg)"/><circle cx="13" cy="13" r="10" fill="#555"/><circle cx="13" cy="13" r="8.5" fill="#a0a0a0"/><circle cx="13" cy="13" r="6.5" fill="#4a4a4a"/><circle cx="13" cy="13" r="5" fill="#9a9a9a"/><path d="M13 13V8M13 13l4.3 2.5M13 13l-4.3 2.5" stroke="#4a4a4a" stroke-width="1.5"/><circle cx="13" cy="13" r="1.5" fill="#4a4a4a"/></svg></div>
<div class="di" style="left:622.5px;background:#c8c8c8;border-radius:5.5px;"><svg width="26" height="26" viewBox="0 0 26 26" style="position:absolute;left:0;top:0"><rect width="26" height="26" fill="#c8c8c8"/><rect x="8.5" y="3" width="9" height="20" rx="2" fill="#222"/><defs><linearGradient id="ipg" x1="0" y1="0" x2="1" y2="1"><stop offset="0" stop-color="#f29a86"/><stop offset="0.5" stop-color="#e9d6cc"/><stop offset="1" stop-color="#2a6fb0"/></linearGradient></defs><rect x="9.5" y="4" width="7" height="18" rx="1.3" fill="url(#ipg)"/></svg></div>
<div class="di" style="left:672px;background:#4cc13a;border-radius:5.5px;"><svg width="26" height="26" viewBox="0 0 26 26" style="position:absolute;left:0;top:0"><rect width="26" height="26" fill="#4cc13a"/><path d="M13 5.5c-5 0-9 3-9 7c0 3.5 3 6.3 7.3 6.9c0.3 0.1 0.6 0.3 0.7 0.5c0.1 0.3 0 0.7 0 1c0 0.3-0.1 0.9 0.7 0.5c0.8-0.4 4.5-2.7 6.2-4.6c1.2-1.3 1.9-2.6 1.9-4.2C21.9 8.5 18 5.5 13 5.5z" fill="#fff"/><text x="13" y="14.5" font-size="5" font-family="Liberation Sans" font-weight="bold" fill="#4cc13a" text-anchor="middle">LINE</text></svg></div>
<div class="di" style="left:706.6px;background:#fcfcfc;border-radius:5.5px;"><svg width="26" height="26" viewBox="0 0 26 26" style="position:absolute;left:0;top:0"><rect width="26" height="26" fill="#fcfcfc"/><rect x="10" y="5" width="12" height="16" rx="1" fill="#1a8fd8"/><rect x="10" y="5" width="12" height="5" fill="#37b0f0"/><rect x="10" y="15" width="12" height="6" fill="#0f5fae"/><rect x="4" y="8.5" width="10" height="10" rx="1" fill="#0b64c0"/><ellipse cx="9" cy="13.5" rx="2.5" ry="3" fill="none" stroke="#fff" stroke-width="1.3"/></svg></div>
<div class="di" style="left:741.1px;background:#fcfcfc;border-radius:5.5px;"><svg width="26" height="26" viewBox="0 0 26 26" style="position:absolute;left:0;top:0"><rect width="26" height="26" fill="#fcfcfc"/><circle cx="14.5" cy="13" r="8.5" fill="#e8663d"/><path d="M14.5 4.5a8.5 8.5 0 0 1 8.5 8.5h-8.5z" fill="#f49c6b"/><rect x="4" y="8.5" width="10" height="10" rx="1" fill="#c13b1a"/><text x="9" y="16.5" font-size="7.5" font-family="Liberation Sans" font-weight="bold" fill="#fff" text-anchor="middle">P</text></svg></div>
<div class="di" style="left:775.7px;background:#fcfcfc;border-radius:5.5px;"><svg width="26" height="26" viewBox="0 0 26 26" style="position:absolute;left:0;top:0"><rect width="26" height="26" fill="#fcfcfc"/><rect x="10" y="5" width="12" height="16" rx="1" fill="#21a366"/><rect x="10" y="5" width="12" height="5" fill="#33c481"/><rect x="10" y="15" width="12" height="6" fill="#107c41"/><rect x="4" y="8.5" width="10" height="10" rx="1" fill="#107c41"/><text x="9" y="16.3" font-size="7" font-family="Liberation Sans" font-weight="bold" fill="#fff" text-anchor="middle">X</text></svg></div>
<div class="di" style="left:810.2px;background:#fafafa;border-radius:5.5px;"><svg width="26" height="26" viewBox="0 0 26 26" style="position:absolute;left:0;top:0"><rect width="26" height="26" fill="#fafafa"/><circle cx="13" cy="13" r="10" fill="#db3236"/><path d="M13 13L4.3 18A10 10 0 0 0 13 23z M13 13V23A10 10 0 0 0 21.7 8z" fill="#3cba54"/><path d="M13 13L21.7 8A10 10 0 0 1 13 23z" fill="#f4c20d"/><path d="M13 13L4.3 18A10 10 0 0 1 13 3z" fill="#db3236"/><path d="M4.3 18A10 10 0 0 0 13 23L17.3 15.5z" fill="#3cba54"/><circle cx="13" cy="13" r="4.6" fill="#fff"/><circle cx="13" cy="13" r="3.6" fill="#4285f4"/></svg></div>
<div class="di" style="left:844.8px;background:#1c2026;border-radius:5.5px;"><svg width="26" height="26" viewBox="0 0 26 26" style="position:absolute;left:0;top:0"><rect width="26" height="26" fill="#1c2026"/><path d="M3 0v26M7 0v26M11 0v26M15 0v26M19 0v26M23 0v26" stroke="#2e333a" stroke-width="0.6"/><path d="M1 16l3-1l2 1.5l3-3l2 2l2-4l2 5l2-3l2 1l2-4l2 1" fill="none" stroke="#c8c8c8" stroke-width="0.7"/><path d="M18 3v22" stroke="#2a8cf0" stroke-width="0.9"/><circle cx="18" cy="10" r="1" fill="#2a8cf0"/></svg></div>
<div class="di" style="left:879.4px;background:#fcfcfc;border-radius:5.5px;"><svg width="26" height="26" viewBox="0 0 26 26" style="position:absolute;left:0;top:0"><rect width="26" height="26" fill="#fcfcfc"/><rect x="10" y="5" width="12" height="16" rx="1" fill="#2b7cd3"/><rect x="10" y="5" width="12" height="5" fill="#41a5ee"/><rect x="10" y="15" width="12" height="6" fill="#185abd"/><rect x="4" y="8.5" width="10" height="10" rx="1" fill="#185abd"/><text x="9" y="16.3" font-size="7" font-family="Liberation Sans" font-weight="bold" fill="#fff" text-anchor="middle">W</text></svg></div>
<div class="a" style="left:660px;top:599px;width:1px;height:31.5px;background:#6a6a6a"></div>
<div class="a" style="left:916.5px;top:599px;width:1px;height:31.5px;background:#6a6a6a"></div>
<svg class="a" style="left:933px;top:598px" width="18" height="31" viewBox="0 0 18 31"><rect x="3" y="2" width="14" height="26" fill="#e9e9e9"/><rect x="0.5" y="0.5" width="15" height="29" fill="#f7f7f7" stroke="#d6d6d6" stroke-width="0.6"/><rect x="1.5" y="0.3" width="8" height="1.2" fill="#3a3a1a"/><rect x="2.5" y="4" width="2" height="0.8" fill="#5cba5c"/><rect x="2.5" y="8.5" width="3" height="1" fill="#3a6ad0"/><rect x="8" y="8.5" width="5" height="1" fill="#d04040"/><rect x="2.5" y="12" width="10" height="0.6" fill="#888"/><rect x="2.5" y="13.5" width="10" height="0.6" fill="#999"/><rect x="6.5" y="16" width="0.6" height="8" fill="#e0a0a0"/><rect x="11.5" y="16" width="0.6" height="8" fill="#c0c0c0"/><rect x="5.5" y="20.5" width="4" height="1.4" rx="0.7" fill="#c83030"/><rect x="2.5" y="26.5" width="1" height="1" fill="#223"/><rect x="4.5" y="26.5" width="9" height="0.6" fill="#aaa"/></svg>
<svg class="a" style="left:964.5px;top:599px" width="24" height="29" viewBox="0 0 24 29"><path d="M1 2.5h22l-2.5 24.5a2 2 0 0 1-2 1.5h-13a2 2 0 0 1-2-1.5z" fill="#6f7579"/><ellipse cx="12" cy="2.8" rx="11" ry="2.2" fill="#8a9094"/><ellipse cx="12" cy="3" rx="9.5" ry="1.5" fill="#5d6266"/></svg>
<div class="a" style="left:46.300000000000004px;top:631.6px;width:2.8px;height:2.8px;border-radius:50%;background:#c4c4c4"></div>
<div class="a" style="left:115.1px;top:631.6px;width:2.8px;height:2.8px;border-radius:50%;background:#c4c4c4"></div>
<div class="a" style="left:149.4px;top:631.6px;width:2.8px;height:2.8px;border-radius:50%;background:#c4c4c4"></div>
<div class="a" style="left:429.6px;top:631.6px;width:2.8px;height:2.8px;border-radius:50%;background:#c4c4c4"></div>
<div class="a" style="left:598.6px;top:631.6px;width:2.8px;height:2.8px;border-radius:50%;background:#c4c4c4"></div>
<div class="a" style="left:683.4px;top:631.6px;width:2.8px;height:2.8px;border-radius:50%;background:#c4c4c4"></div>
<div class="a" style="left:718.0px;top:631.6px;width:2.8px;height:2.8px;border-radius:50%;background:#c4c4c4"></div>
<div class="a" style="left:752.5px;top:631.6px;width:2.8px;height:2.8px;border-radius:50%;background:#c4c4c4"></div>
<div class="a" style="left:787.1px;top:631.6px;width:2.8px;height:2.8px;border-radius:50%;background:#c4c4c4"></div>
<div class="a" style="left:821.6px;top:631.6px;width:2.8px;height:2.8px;border-radius:50%;background:#c4c4c4"></div>
<div class="a" style="left:856.1px;top:631.6px;width:2.8px;height:2.8px;border-radius:50%;background:#c4c4c4"></div>
<div class="a" style="left:890.8000000000001px;top:631.6px;width:2.8px;height:2.8px;border-radius:50%;background:#c4c4c4"></div>
<div class="a" style="left:156px;top:597px;width:12px;height:12px;border-radius:50%;background:#e8453c;color:#fff;font:7.5px/12px 'Liberation Sans',sans-serif;text-align:center">1</div>
<div class="a" style="left:397.5px;top:597px;width:12px;height:12px;border-radius:50%;background:#e8453c;color:#fff;font:7.5px/12px 'Liberation Sans',sans-serif;text-align:center">3</div>
<div class="a" style="left:605px;top:597px;width:12px;height:12px;border-radius:50%;background:#e8453c;color:#fff;font:7.5px/12px 'Liberation Sans',sans-serif;text-align:center">2</div>
</div>
</body></html>
